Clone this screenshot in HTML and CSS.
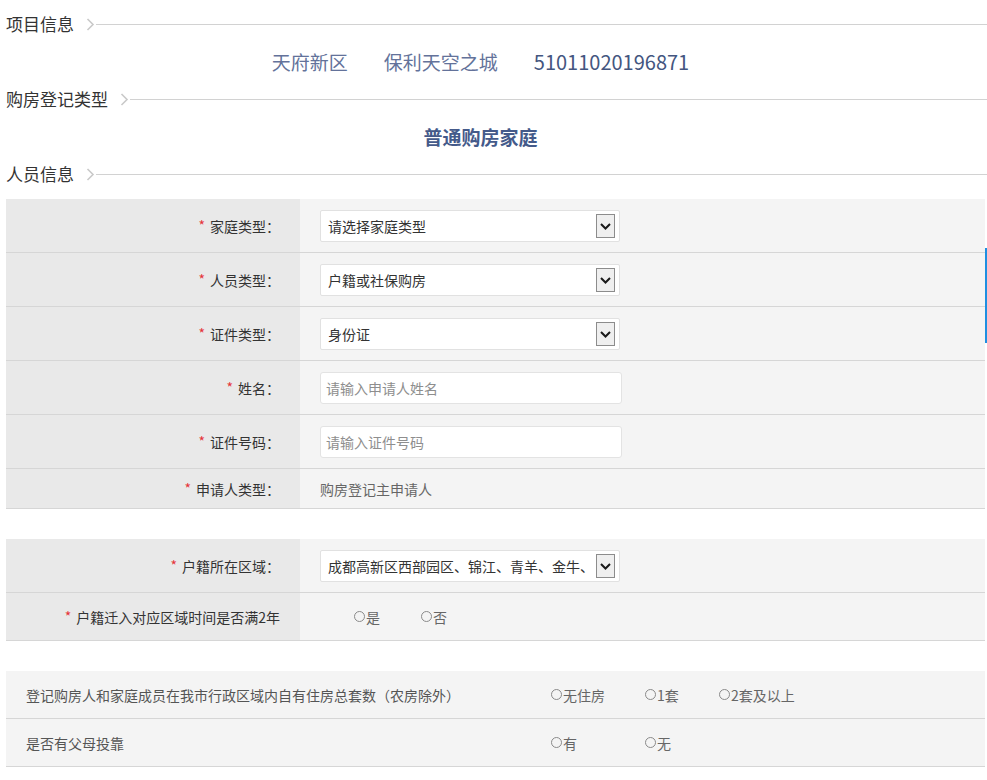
FILE: index.html
```html
<!DOCTYPE html>
<html lang="zh-CN">
<head>
<meta charset="utf-8">
<title>购房登记</title>
<link rel="stylesheet" href="styles.css">
</head>
<body>
<div class="page">
  <div class="sec-head">
    <span class="sec-title">项目信息</span>
    <svg class="chev" width="9" height="13" viewBox="0 0 9 13"><polyline points="1.5,1 7,6.5 1.5,12" fill="none" stroke="#c9c9c9" stroke-width="1.6"/></svg>
    <span class="sec-line"></span>
  </div>
  <div class="proj">
    <span class="proj-item">天府新区</span>
    <span class="proj-item">保利天空之城</span>
    <span class="proj-item num">51011020196871</span>
  </div>
  <div class="sec-head">
    <span class="sec-title">购房登记类型</span>
    <svg class="chev" width="9" height="13" viewBox="0 0 9 13"><polyline points="1.5,1 7,6.5 1.5,12" fill="none" stroke="#c9c9c9" stroke-width="1.6"/></svg>
    <span class="sec-line"></span>
  </div>
  <div class="reg-type">普通购房家庭</div>
  <div class="sec-head">
    <span class="sec-title">人员信息</span>
    <svg class="chev" width="9" height="13" viewBox="0 0 9 13"><polyline points="1.5,1 7,6.5 1.5,12" fill="none" stroke="#c9c9c9" stroke-width="1.6"/></svg>
    <span class="sec-line"></span>
  </div>

  <div class="form-table first">
    <div class="row">
      <div class="lbl"><span class="req">*</span>家庭类型：</div>
      <div class="val">
        <div class="select"><span class="sel-text">请选择家庭类型</span>
          <svg class="sel-arrow" width="19" height="24" viewBox="0 0 19 24"><rect x="0.5" y="0.5" width="18" height="23" fill="#efefef" stroke="#8c8c8c"/><polyline points="5,10 9.5,14.5 14,10" fill="none" stroke="#1a1a1a" stroke-width="2"/></svg>
        </div>
      </div>
    </div>
    <div class="row">
      <div class="lbl"><span class="req">*</span>人员类型：</div>
      <div class="val">
        <div class="select"><span class="sel-text">户籍或社保购房</span>
          <svg class="sel-arrow" width="19" height="24" viewBox="0 0 19 24"><rect x="0.5" y="0.5" width="18" height="23" fill="#efefef" stroke="#8c8c8c"/><polyline points="5,10 9.5,14.5 14,10" fill="none" stroke="#1a1a1a" stroke-width="2"/></svg>
        </div>
      </div>
    </div>
    <div class="row">
      <div class="lbl"><span class="req">*</span>证件类型：</div>
      <div class="val">
        <div class="select"><span class="sel-text">身份证</span>
          <svg class="sel-arrow" width="19" height="24" viewBox="0 0 19 24"><rect x="0.5" y="0.5" width="18" height="23" fill="#efefef" stroke="#8c8c8c"/><polyline points="5,10 9.5,14.5 14,10" fill="none" stroke="#1a1a1a" stroke-width="2"/></svg>
        </div>
      </div>
    </div>
    <div class="row">
      <div class="lbl"><span class="req">*</span>姓名：</div>
      <div class="val"><input class="txt" type="text" placeholder="请输入申请人姓名"></div>
    </div>
    <div class="row">
      <div class="lbl"><span class="req">*</span>证件号码：</div>
      <div class="val"><input class="txt" type="text" placeholder="请输入证件号码"></div>
    </div>
    <div class="row short">
      <div class="lbl"><span class="req">*</span>申请人类型：</div>
      <div class="val"><span class="plain">购房登记主申请人</span></div>
    </div>
  </div>

  <div class="form-table second">
    <div class="row">
      <div class="lbl"><span class="req">*</span>户籍所在区域：</div>
      <div class="val">
        <div class="select"><span class="sel-text">成都高新区西部园区、锦江、青羊、金牛、</span>
          <svg class="sel-arrow" width="19" height="24" viewBox="0 0 19 24"><rect x="0.5" y="0.5" width="18" height="23" fill="#efefef" stroke="#8c8c8c"/><polyline points="5,10 9.5,14.5 14,10" fill="none" stroke="#1a1a1a" stroke-width="2"/></svg>
        </div>
      </div>
    </div>
    <div class="row mid">
      <div class="lbl"><span class="req">*</span>户籍迁入对应区域时间是否满2年</div>
      <div class="val radios">
        <span class="opt w67"><i class="radio"></i>是</span>
        <span class="opt w67"><i class="radio"></i>否</span>
      </div>
    </div>
  </div>

  <div class="q-table">
    <div class="q-row">
      <div class="q-lbl">登记购房人和家庭成员在我市行政区域内自有住房总套数（农房除外）</div>
      <div class="q-opts">
        <span class="opt w94"><i class="radio"></i>无住房</span>
        <span class="opt w74"><i class="radio"></i>1套</span>
        <span class="opt"><i class="radio"></i>2套及以上</span>
      </div>
    </div>
    <div class="q-row">
      <div class="q-lbl">是否有父母投靠</div>
      <div class="q-opts">
        <span class="opt w94"><i class="radio"></i>有</span>
        <span class="opt w74"><i class="radio"></i>无</span>
      </div>
    </div>
  </div>
</div>
<div class="scroll-mark"></div>
</body>
</html>
```
FILE: styles.css
```css
html, body {
  margin: 0;
  padding: 0;
  background: #ffffff;
}
body {
  position: relative;
  font-family: "Noto Sans CJK SC", "Noto Sans", sans-serif;
  color: #333333;
}
.page {
  padding: 10px 2px 20px 6px;
}
.sec-head {
  display: flex;
  align-items: center;
  height: 28px;
  margin-right: -2px;
}
.sec-title {
  font-size: 17px;
  color: #333333;
  line-height: 28px;
  white-space: nowrap;
}
.chev {
  margin-left: 12px;
  flex: none;
}
.sec-line {
  flex: 1;
  height: 1px;
  background: #d2d2d2;
  margin-left: 1px;
}
.proj {
  height: 47px;
  display: flex;
  align-items: center;
  justify-content: center;
  gap: 36px;
  padding-right: 30px;
}
.proj-item {
  font-size: 19px;
  color: #63729a;
}
.proj-item.num {
  font-size: 20px;
  color: #445680;
}
.reg-type {
  height: 47px;
  display: flex;
  align-items: center;
  justify-content: center;
  padding-right: 30px;
  font-size: 19px;
  font-weight: bold;
  color: #445a8a;
}
.form-table.first {
  margin-top: 11px;
}
.form-table.second {
  margin-top: 30px;
}
.row {
  display: flex;
  height: 53px;
  border-bottom: 1px solid #d6d6d6;
}
.row.short {
  height: 39px;
}
.row.mid {
  height: 47px;
}
.lbl {
  width: 294px;
  flex: none;
  box-sizing: border-box;
  padding-right: 20px;
  background: #e9e9e9;
  display: flex;
  align-items: center;
  justify-content: flex-end;
  font-size: 14px;
  color: #333333;
  white-space: nowrap;
}
.req {
  color: #e5353a;
  font-size: 14px;
  margin-right: 5px;
  position: relative;
  top: -1px;
}
.val {
  flex: 1;
  background: #f4f4f4;
  display: flex;
  align-items: center;
  padding-left: 20px;
}
.select {
  width: 300px;
  height: 32px;
  box-sizing: border-box;
  border: 1px solid #e1e1e1;
  border-radius: 2px;
  background: #ffffff;
  display: flex;
  align-items: center;
  padding-left: 7px;
  padding-right: 4px;
}
.sel-text {
  flex: 1;
  font-size: 14px;
  color: #333333;
  white-space: nowrap;
}
.sel-arrow {
  flex: none;
}
.txt {
  width: 302px;
  height: 32px;
  box-sizing: border-box;
  border: 1px solid #e3e3e3;
  border-radius: 3px;
  background: #ffffff;
  padding: 0 5px;
  font-family: "Noto Sans CJK SC", "Noto Sans", sans-serif;
  font-size: 14px;
  color: #333333;
  outline: none;
}
.txt::placeholder {
  color: #8e8e8e;
}
.plain {
  font-size: 14px;
  color: #666666;
}
.val.radios {
  padding-left: 54px;
}
.opt {
  display: inline-flex;
  align-items: center;
  font-size: 14px;
  color: #666666;
  white-space: nowrap;
}
.w67 { width: 67px; }
.w94 { width: 94px; }
.w74 { width: 74px; }
.radio {
  display: inline-block;
  width: 11px;
  height: 11px;
  box-sizing: border-box;
  border: 1px solid #8a8a8a;
  border-radius: 50%;
  margin-right: 1px;
  background: transparent;
}
.q-table {
  margin-top: 30px;
}
.q-row {
  display: flex;
  height: 47px;
  background: #f4f4f4;
  border-bottom: 1px solid #d6d6d6;
}
.q-lbl {
  width: 545px;
  flex: none;
  box-sizing: border-box;
  padding-left: 20px;
  display: flex;
  align-items: center;
  font-size: 14px;
  color: #555555;
  white-space: nowrap;
}
.q-opts {
  flex: 1;
  display: flex;
  align-items: center;
}
.scroll-mark {
  position: absolute;
  left: 985px;
  top: 248px;
  width: 2px;
  height: 95px;
  background: #1e8fe1;
}
```
